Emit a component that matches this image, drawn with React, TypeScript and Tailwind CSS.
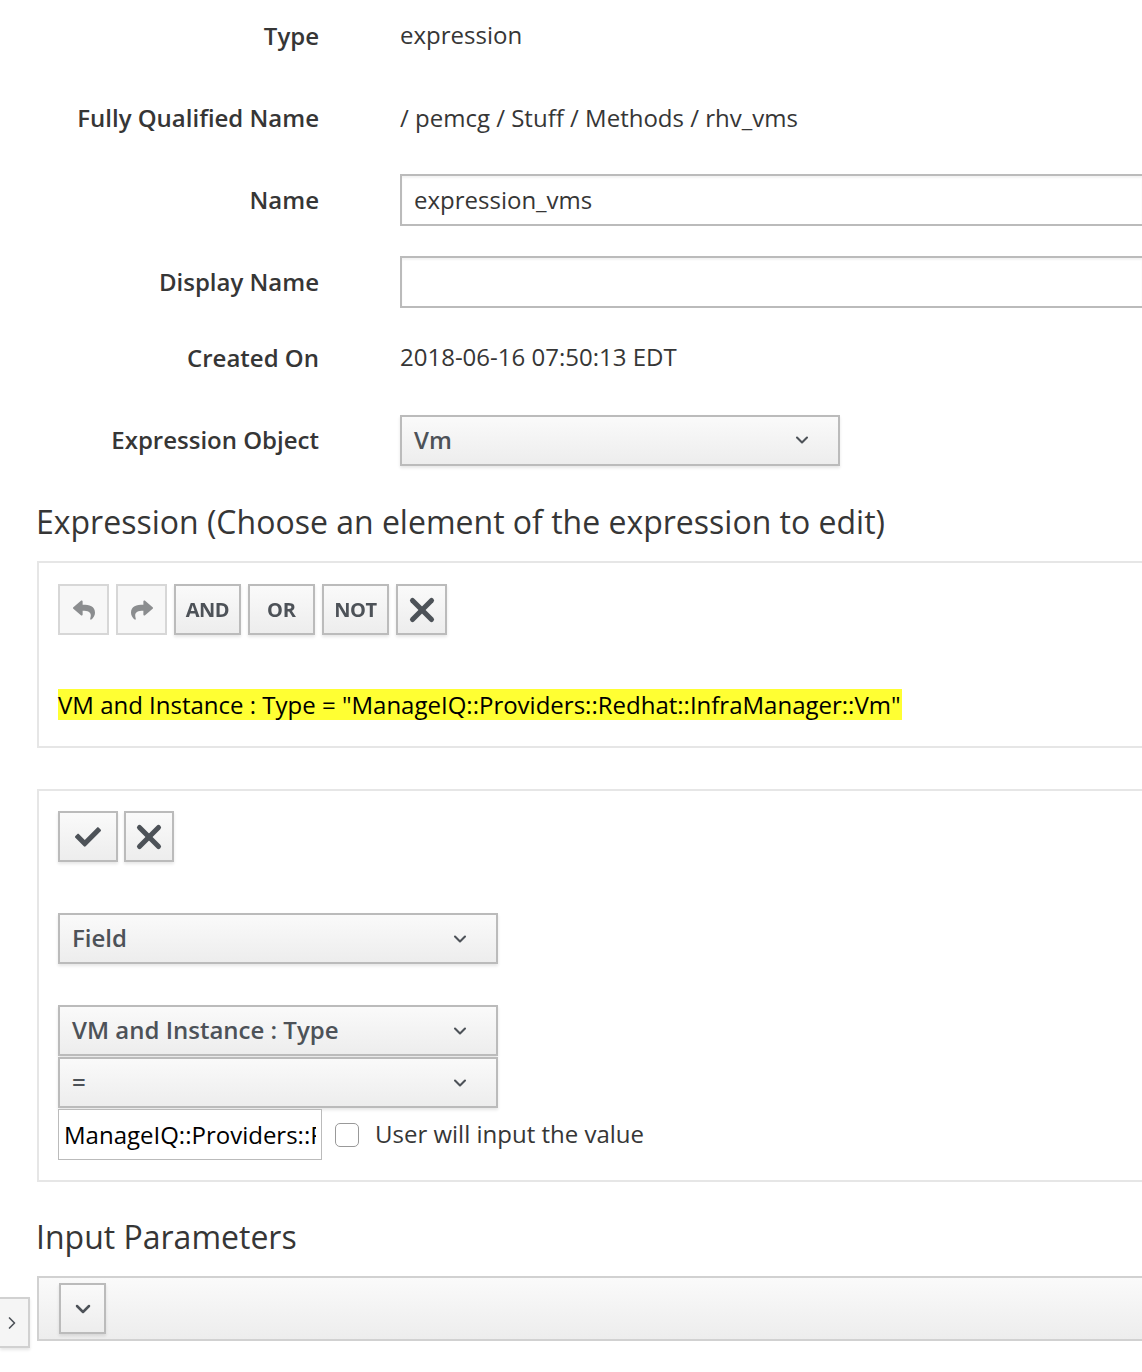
import { FaReply, FaShare, FaCheck } from 'react-icons/fa';
import { ChevronDown, ChevronRight, X } from 'lucide-react';

const font = { fontFamily: '"Open Sans", "Liberation Sans", sans-serif' };

const btnLook =
  'border-[#bbb] bg-gradient-to-b from-[#fafafa] to-[#ededed] text-[#4d5258] shadow-[0_2px_3px_rgba(3,3,3,0.1)]';

const Select = ({ label, className = '' }: { label: string; className?: string }) => (
  <div className={`flex items-center justify-between border-2 pl-[12px] pr-[13px] h-[51px] w-[440px] ${btnLook} ${className}`}>
    <span className="text-[24px] font-semibold text-[#4d5258] -mt-[1px]">{label}</span>
    <ChevronDown size={20} strokeWidth={2.5} className="mr-[13px] text-[#4d5258]" />
  </div>
);

const Row = ({ label, children, className = '' }: { label: string; children: React.ReactNode; className?: string }) => (
  <div className={`flex items-center h-[50px] ${className}`}>
    <div className="w-[319px] text-right text-[24px] font-semibold text-[#363636] -mt-[1px]">{label}</div>
    <div className="ml-[81px] flex-1 flex items-center min-w-0">{children}</div>
  </div>
);

const TextBox = ({ value = '' }: { value?: string }) => (
  <div className="w-full h-[52px] border-2 border-[#bbb] border-r-0 bg-white shadow-[inset_0_2px_2px_rgba(3,3,3,0.05)] flex items-center px-[12px] text-[24px] text-[#363636]">
    {value}
  </div>
);

const ToolBtn = ({ children, disabled = false, w }: { children: React.ReactNode; disabled?: boolean; w: string }) => (
  <div
    className={
      disabled
        ? `flex items-center justify-center h-[51px] ${w} border-2 border-[#d7d7d7] bg-[#f7f7f7] text-[#8b8d8f]`
        : `flex items-center justify-center border-2 h-[51px] ${w} ${btnLook}`
    }
  >
    {children}
  </div>
);

const Times = () => <X size={38} strokeWidth={3.2} className="text-[#4d5258]" />;

export default function App() {
  return (
    <div className="relative w-[1142px] h-[1372px] bg-white overflow-hidden text-[#363636]" style={font}>
      <div className="pt-[11px]">
        <Row label="Type">
          <span className="text-[24px] -mt-[2px]">expression</span>
        </Row>
        <Row label="Fully Qualified Name" className="mt-[32px]">
          <span className="text-[24px] -mt-[1px]">/ pemcg / Stuff / Methods / rhv_vms</span>
        </Row>
        <Row label="Name" className="mt-[32px]">
          <TextBox value="expression_vms" />
        </Row>
        <Row label="Display Name" className="mt-[32px]">
          <TextBox />
        </Row>
        <Row label="Created On" className="mt-[26px]">
          <span className="text-[24px] -mt-[2px]">2018-06-16 07:50:13 EDT</span>
        </Row>
        <Row label="Expression Object" className="mt-[32px]">
          <Select label="Vm" />
        </Row>
      </div>

      <div className="pl-[37px]">
        <h3 className="mt-[35px] -ml-[1px] text-[32px] leading-[44px] text-[#363636]">
          Expression (Choose an element of the expression to edit)
        </h3>

        <div className="mt-[17px] border-2 border-r-0 border-[#e6e6e6] h-[187px] pl-[19px] pt-[21px]">
          <div className="flex gap-[7px]">
            <ToolBtn disabled w="w-[51px]">
              <FaReply size={22} />
            </ToolBtn>
            <ToolBtn disabled w="w-[51px]">
              <FaShare size={22} />
            </ToolBtn>
            <ToolBtn w="w-[67px]">
              <span className="text-[20px] font-bold tracking-[-0.5px] blur-[0.6px]">AND</span>
            </ToolBtn>
            <ToolBtn w="w-[67px]">
              <span className="text-[20px] font-bold blur-[0.6px]">OR</span>
            </ToolBtn>
            <ToolBtn w="w-[67px]">
              <span className="text-[20px] font-bold tracking-[-0.5px] blur-[0.6px]">NOT</span>
            </ToolBtn>
            <ToolBtn w="w-[51px]">
              <Times />
            </ToolBtn>
          </div>
          <div className="mt-[54px]">
            <span className="bg-[#ffff33] text-[24px] leading-[31px] text-black inline-block pr-[1px]">
              VM and Instance : Type = "ManageIQ::Providers::Redhat::InfraManager::Vm"
            </span>
          </div>
        </div>

        <div className="mt-[41px] border-2 border-r-0 border-[#e6e6e6] h-[393px] pl-[19px] pt-[20px]">
          <div className="flex gap-[6px]">
            <ToolBtn w="w-[60px]">
              <FaCheck size={26} />
            </ToolBtn>
            <ToolBtn w="w-[50px]">
              <Times />
            </ToolBtn>
          </div>
          <Select label="Field" className="mt-[51px]" />
          <Select label="VM and Instance : Type" className="mt-[41px]" />
          <Select label="=" className="mt-[1px]" />
          <div className="flex items-center mt-[1px]">
            <input
              readOnly
              value="ManageIQ::Providers::Redhat::InfraManager::Vm"
              className="w-[264px] h-[51px] border border-[#bbb] bg-white px-[5px] text-[24px] text-black outline-none"
            />
            <div className="ml-[13px] w-[24px] h-[24px] rounded-[5px] border border-[#999] bg-white" />
            <span className="ml-[16px] text-[24px] text-[#363636] -mt-[2px]">User will input the value</span>
          </div>
        </div>

        <h3 className="mt-[33px] -ml-[1px] text-[32px] leading-[44px] text-[#363636]">Input Parameters</h3>

        <div className="mt-[17px] h-[65px] border-2 border-r-0 border-[#d1d1d1] bg-gradient-to-b from-[#fafafa] to-[#ededed] flex items-center pl-[20px]">
          <div className={`flex items-center justify-center border-2 w-[47px] h-[51px] ${btnLook}`}>
            <ChevronDown size={24} strokeWidth={2.5} />
          </div>
        </div>
      </div>

      <div className="absolute left-0 top-[1297px] w-[30px] h-[51px] border-2 border-l-0 border-[#d1d1d1] bg-[#f5f5f5] flex items-center justify-start pl-[2px] text-[#4d5258] shadow-[0_2px_3px_rgba(3,3,3,0.1)]">
        <ChevronRight size={20} strokeWidth={2} />
      </div>
    </div>
  );
}
